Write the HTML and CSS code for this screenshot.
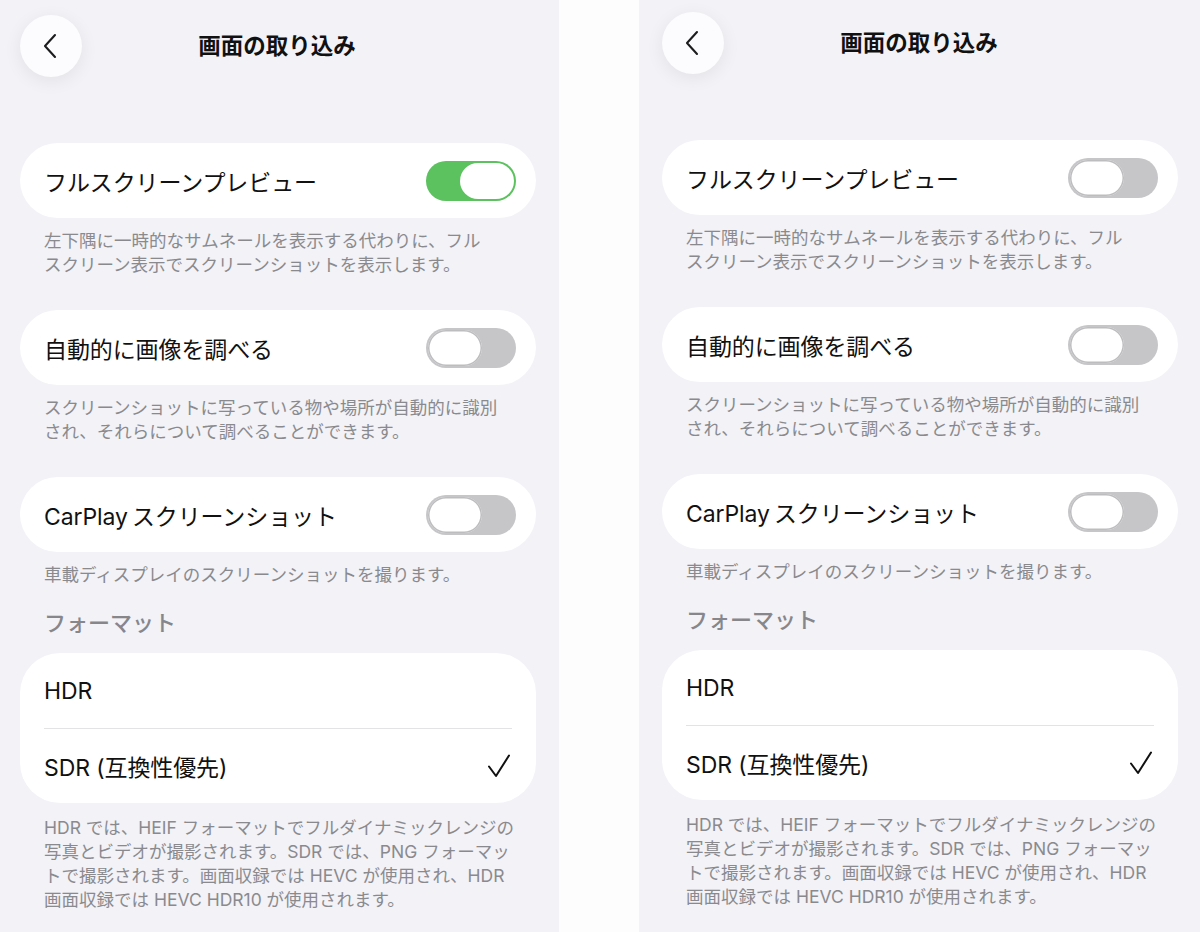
FILE: index.html
```html
<!DOCTYPE html>
<html lang="ja">
<head>
<meta charset="UTF-8" />
<meta name="viewport" content="width=device-width, initial-scale=1" />
<title>画面の取り込み</title>
<link rel="stylesheet" href="styles.css">
</head>
<body>

<!-- 左：フルスクリーンプレビュー オン -->
<section class="screen screen-left">
  <header class="nav">
    <button class="back" aria-label="戻る">
      <svg width="14" height="26" viewBox="0 0 14 26"><path d="M12 2 L2 13 L12 24" fill="none" stroke="#1c1c1e" stroke-width="2.1" stroke-linecap="round" stroke-linejoin="round"/></svg>
    </button>
    <h1 class="title">画面の取り込み</h1>
  </header>

  <div class="card row">
    <span class="label">フルスクリーンプレビュー</span>
    <span class="toggle on"><span class="knob"></span></span>
  </div>
  <p class="note">左下隅に一時的なサムネールを表示する代わりに、フル<br>スクリーン表示でスクリーンショットを表示します。</p>

  <div class="card row">
    <span class="label">自動的に画像を調べる</span>
    <span class="toggle"><span class="knob"></span></span>
  </div>
  <p class="note">スクリーンショットに写っている物や場所が自動的に識別<br>され、それらについて調べることができます。</p>

  <div class="card row">
    <span class="label">CarPlay&thinsp;スクリーンショット</span>
    <span class="toggle"><span class="knob"></span></span>
  </div>
  <p class="note">車載ディスプレイのスクリーンショットを撮ります。</p>

  <h2 class="section">フォーマット</h2>
  <div class="card list">
    <div class="item"><span class="label">HDR</span></div>
    <div class="item">
      <span class="label">SDR (互換性優先)</span>
      <svg class="check" width="24" height="24" viewBox="0 0 24 24"><path d="M2 12.5 L9 22 L22 1.5" fill="none" stroke="#111" stroke-width="2" stroke-linecap="round" stroke-linejoin="round"/></svg>
    </div>
  </div>
  <p class="note last">HDR では、HEIF フォーマットでフルダイナミックレンジの<br>写真とビデオが撮影されます。SDR では、PNG フォーマッ<br>トで撮影されます。画面収録では HEVC が使用され、HDR<br>画面収録では HEVC HDR10 が使用されます。</p>
</section>

<!-- 右：フルスクリーンプレビュー オフ -->
<section class="screen screen-right">
  <header class="nav">
    <button class="back" aria-label="戻る">
      <svg width="14" height="26" viewBox="0 0 14 26"><path d="M12 2 L2 13 L12 24" fill="none" stroke="#1c1c1e" stroke-width="2.1" stroke-linecap="round" stroke-linejoin="round"/></svg>
    </button>
    <h1 class="title">画面の取り込み</h1>
  </header>

  <div class="card row">
    <span class="label">フルスクリーンプレビュー</span>
    <span class="toggle"><span class="knob"></span></span>
  </div>
  <p class="note">左下隅に一時的なサムネールを表示する代わりに、フル<br>スクリーン表示でスクリーンショットを表示します。</p>

  <div class="card row">
    <span class="label">自動的に画像を調べる</span>
    <span class="toggle"><span class="knob"></span></span>
  </div>
  <p class="note">スクリーンショットに写っている物や場所が自動的に識別<br>され、それらについて調べることができます。</p>

  <div class="card row">
    <span class="label">CarPlay&thinsp;スクリーンショット</span>
    <span class="toggle"><span class="knob"></span></span>
  </div>
  <p class="note">車載ディスプレイのスクリーンショットを撮ります。</p>

  <h2 class="section">フォーマット</h2>
  <div class="card list">
    <div class="item"><span class="label">HDR</span></div>
    <div class="item">
      <span class="label">SDR (互換性優先)</span>
      <svg class="check" width="24" height="24" viewBox="0 0 24 24"><path d="M2 12.5 L9 22 L22 1.5" fill="none" stroke="#111" stroke-width="2" stroke-linecap="round" stroke-linejoin="round"/></svg>
    </div>
  </div>
  <p class="note last">HDR では、HEIF フォーマットでフルダイナミックレンジの<br>写真とビデオが撮影されます。SDR では、PNG フォーマッ<br>トで撮影されます。画面収録では HEVC が使用され、HDR<br>画面収録では HEVC HDR10 が使用されます。</p>
</section>

</body>
</html>
```

FILE: styles.css
```css
/* 共通 */
*, *::before, *::after {
  box-sizing: border-box;
}
body {
  margin: 0;
  height: 932px;
  display: flex;
  background: #fdfdfd;
  font-family: 'Inter', 'Noto Sans CJK JP', sans-serif;
  color: #111;
  overflow: hidden;
}

/* 画面 */
.screen {
  height: 100%;
  background: #f2f2f7;
  padding: 15px 0 0 20px;
}
.screen-left {
  width: 559px;
}
.screen-right {
  width: 561px;
  margin-left: 80px;
  padding-top: 12px;
  padding-left: 23px;
}

/* ナビゲーション */
.nav {
  display: flex;
  align-items: center;
  width: 516px;
  height: 62px;
  margin-bottom: 66px;
}
.back {
  flex: none;
  width: 62px;
  height: 62px;
  border: none;
  border-radius: 50%;
  background: #fcfcfe;
  box-shadow: 0 4px 18px rgba(0, 0, 0, 0.07);
  display: flex;
  align-items: center;
  justify-content: center;
  padding: 0 3px 0 0;
}
.title {
  flex: 1;
  margin: 0 0 0 -2px;
  padding-right: 62px;
  text-align: center;
  font-size: 22.5px;
  font-weight: 700;
  color: #111;
  line-height: 1;
}

/* カード */
.card {
  width: 516px;
  background: #fff;
}
.row {
  height: 75px;
  border-radius: 38px;
  display: flex;
  align-items: center;
  justify-content: space-between;
  padding: 0 20px 0 24px;
}
.label {
  font-size: 23px;
  color: #111;
  letter-spacing: -0.1px;
}

/* トグル */
.toggle {
  position: relative;
  width: 90px;
  height: 40px;
  border-radius: 20px;
  background: #c6c6c9;
}
.toggle .knob {
  position: absolute;
  top: 2px;
  left: 2px;
  width: 54px;
  height: 36px;
  border-radius: 18px;
  background: #fff;
  box-shadow: 0 0 0 1.5px #bdbdc0 inset;
}
.toggle.on {
  background: #5cc15f;
}
.toggle.on .knob {
  left: 34px;
  box-shadow: none;
}

/* 説明文 */
.note {
  margin: 0 0 33px;
  padding: 11px 24px 0;
  font-size: 17.5px;
  line-height: 24px;
  color: #8a8a8e;
}
.note.last {
  padding-top: 13px;
  margin-bottom: 0;
}

/* セクション見出し */
.section {
  margin: -12px 0 15px;
  padding-left: 24px;
  font-size: 22px;
  font-weight: 500;
  line-height: 30px;
  color: #86868b;
}

/* リスト */
.list {
  border-radius: 40px;
  padding: 0 24px;
}
.item {
  height: 75px;
  display: flex;
  align-items: center;
  justify-content: space-between;
}
.item + .item {
  border-top: 1px solid #e3e3e6;
}
.check {
  margin-right: 1px;
}
```
